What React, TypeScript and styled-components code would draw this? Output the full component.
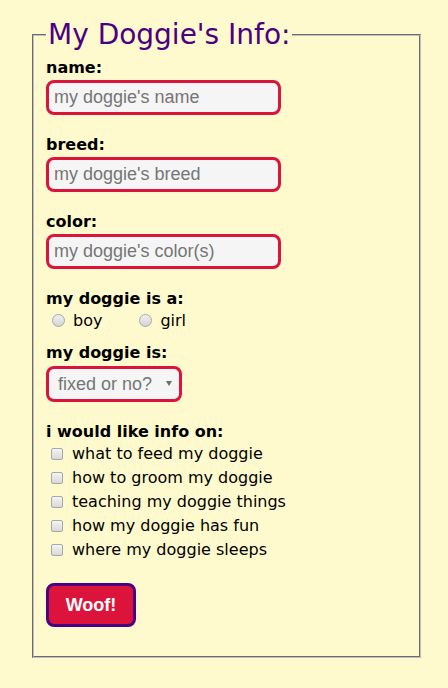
import styled, { createGlobalStyle } from 'styled-components';

const GlobalStyle = createGlobalStyle`
	body {
		margin: 0;
		background-color: #fffacd;
		font-family: 'DejaVu Sans', Verdana, sans-serif;
	}
`;

const Page = styled.div`
	padding: 18px 27px 30px 32px;
`;

const Fieldset = styled.fieldset`
	margin: 0;
	padding: 7px 12px 29px 12px;
	border: 2px groove #c0c0c0;
`;

const Legend = styled.legend`
	padding: 0 2px;
	font-size: 28px;
	color: #4b0082;
`;

const Group = styled.div<{ $space?: number }>`
	margin-bottom: ${(props) => props.$space ?? 20}px;
`;

const Label = styled.label`
	display: block;
	font-weight: bold;
	font-size: 16px;
	color: #000;
	margin-bottom: 3px;
`;

const TextInput = styled.input`
	display: block;
	box-sizing: border-box;
	width: 235px;
	height: 35px;
	padding: 0 5px;
	font-family: 'Liberation Sans', Arial, sans-serif;
	font-size: 18px;
	background-color: #f5f5f5;
	border: 3px solid #dc143c;
	border-radius: 8px;
	outline: none;

	&::placeholder {
		color: #757575;
	}
`;

const Options = styled.div<{ $column?: boolean }>`
	display: flex;
	flex-direction: ${(props) => (props.$column ? 'column' : 'row')};
	gap: ${(props) => (props.$column ? '5px' : '0')};
	margin-top: 2px;
`;

const Option = styled.label`
	display: flex;
	align-items: center;
	font-size: 16px;
	color: #000;
	margin-right: 31px;
	height: 19px;
`;

const Radio = styled.input`
	appearance: none;
	box-sizing: border-box;
	width: 13px;
	height: 13px;
	margin: 0 8px 0 6px;
	border-radius: 50%;
	border: 1px solid #a9a9a9;
	background: linear-gradient(#f0f0f0, #d4d4d4);
`;

const Checkbox = styled.input`
	appearance: none;
	box-sizing: border-box;
	width: 12px;
	height: 12px;
	margin: 0 9px 0 5px;
	border-radius: 2px;
	border: 1px solid #a9a9a9;
	background: linear-gradient(#f4f4f4, #d8d8d8);
`;

const SelectWrap = styled.div`
	position: relative;
	width: 136px;
	padding-top: 1px;
`;

const Select = styled.select`
	appearance: none;
	box-sizing: border-box;
	width: 136px;
	height: 36px;
	padding: 0 20px 0 9px;
	font-family: 'Liberation Sans', Arial, sans-serif;
	font-size: 18px;
	color: #757575;
	background-color: #f5f5f5;
	border: 3px solid #dc143c;
	border-radius: 8px;
	outline: none;
`;

const Arrow = styled.span`
	position: absolute;
	right: 10px;
	top: 16px;
	width: 0;
	height: 0;
	border-left: 3px solid transparent;
	border-right: 3px solid transparent;
	border-top: 5px solid #6d6d6d;
	pointer-events: none;
`;

const Button = styled.button`
	box-sizing: border-box;
	width: 90px;
	height: 44px;
	margin-top: 4px;
	font-family: 'Liberation Sans', Arial, sans-serif;
	font-size: 18px;
	font-weight: bold;
	color: #fff;
	background-color: #dc143c;
	border: 3px solid #4b0082;
	border-radius: 8px;
`;

const topics = [
	'what to feed my doggie',
	'how to groom my doggie',
	'teaching my doggie things',
	'how my doggie has fun',
	'where my doggie sleeps',
];

const App = () => {
	return (
		<Page>
			<GlobalStyle />
			<form>
				<Fieldset>
					<Legend>My Doggie's Info:</Legend>
					<Group>
						<Label htmlFor="name">name:</Label>
						<TextInput id="name" placeholder="my doggie's name" />
					</Group>
					<Group>
						<Label htmlFor="breed">breed:</Label>
						<TextInput id="breed" placeholder="my doggie's breed" />
					</Group>
					<Group>
						<Label htmlFor="color">color:</Label>
						<TextInput id="color" placeholder="my doggie's color(s)" />
					</Group>
					<Group $space={13}>
						<Label as="div">my doggie is a:</Label>
						<Options>
							<Option>
								<Radio type="radio" name="sex" value="boy" />
								boy
							</Option>
							<Option>
								<Radio type="radio" name="sex" value="girl" />
								girl
							</Option>
						</Options>
					</Group>
					<Group>
						<Label htmlFor="fixed">my doggie is:</Label>
						<SelectWrap>
							<Select id="fixed" defaultValue="">
								<option value="" disabled>
									fixed or no?
								</option>
								<option value="yes">fixed</option>
								<option value="no">not fixed</option>
							</Select>
							<Arrow />
						</SelectWrap>
					</Group>
					<Group>
						<Label as="div">i would like info on:</Label>
						<Options $column>
							{topics.map((topic) => (
								<Option key={topic}>
									<Checkbox type="checkbox" />
									{topic}
								</Option>
							))}
						</Options>
					</Group>
					<Button type="button">Woof!</Button>
				</Fieldset>
			</form>
		</Page>
	);
};

export default App;
